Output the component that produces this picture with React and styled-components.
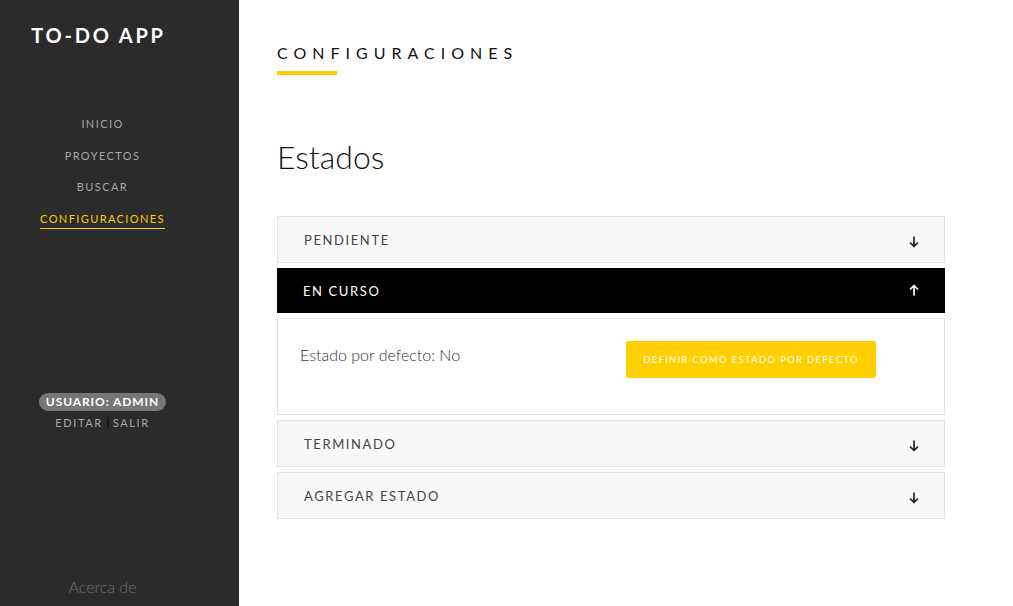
import React from "react";
import styled, { createGlobalStyle } from "styled-components";

const Global = createGlobalStyle`
  html, body { margin: 0; padding: 0; height: 100%; }
  body { font-family: "Lato", "Open Sans", sans-serif; background: #fff; }
  #root { height: 100%; }
  * { box-sizing: border-box; }
`;

const Layout = styled.div`
  display: flex;
  height: 606px;
  width: 1013px;
  overflow: hidden;
`;

const Sidebar = styled.aside`
  width: 239px;
  flex: 0 0 239px;
  background: #2b2b2b;
  display: flex;
  flex-direction: column;
  align-items: center;
  padding: 22px 34px 0 0;
`;

const Brand = styled.div`
  color: #fff;
  font-weight: 700;
  font-size: 20px;
  letter-spacing: 2.8px;
  line-height: 26px;
  margin-left: -8px;
`;

const Nav = styled.nav`
  display: flex;
  flex-direction: column;
  align-items: center;
  gap: 12.6px;
  margin-top: 67px;
`;

const NavItem = styled.a`
  font-size: 11px;
  letter-spacing: 1.4px;
  line-height: 18px;
  color: ${(p) => (p.$active ? "#ffcc00" : "#a7a7a7")};
  border-bottom: 1px solid ${(p) => (p.$active ? "#ffcc00" : "transparent")};
  text-decoration: none;
  cursor: pointer;
`;

const User = styled.div`
  margin-top: 164px;
  display: flex;
  flex-direction: column;
  align-items: center;
  gap: 4px;
`;

const Pill = styled.div`
  background: #767676;
  color: #fff;
  font-weight: 700;
  font-size: 12px;
  letter-spacing: 0.9px;
  line-height: 18px;
  padding: 0 7px;
  border-radius: 9px;
`;

const UserLinks = styled.div`
  display: flex;
  align-items: center;
  gap: 4px;
  font-size: 11px;
  letter-spacing: 1.6px;
  color: #a7a7a7;
  line-height: 16px;
`;

const Sep = styled.span`
  width: 2px;
  height: 11px;
  background: #1a1a1a;
`;

const About = styled.div`
  margin-top: auto;
  margin-bottom: 10px;
  font-size: 16px;
  color: #6f6f6f;
  font-weight: 300;
`;

const Main = styled.main`
  flex: 1;
  padding: 42px 68px 0 38px;
`;

const PageTitle = styled.h1`
  margin: 0;
  font-size: 16px;
  font-weight: 400;
  letter-spacing: 6px;
  color: #111;
  line-height: 22px;
  &::after {
    content: "";
    display: block;
    width: 60px;
    height: 4px;
    background: #ffcc00;
    margin-top: 7px;
  }
`;

const Section = styled.h2`
  margin: 63px 0 40px;
  font-size: 32px;
  font-weight: 300;
  color: #111;
  line-height: 38px;
`;

const Accordion = styled.div`
  width: 668px;
  display: flex;
  flex-direction: column;
  gap: 5px;
`;

const Header = styled.div`
  height: ${(p) => (p.$open ? "45px" : "47px")};
  display: flex;
  align-items: center;
  justify-content: space-between;
  padding: 0 25px 0 ${(p) => (p.$open ? "25px" : "26px")};
  background: ${(p) => (p.$open ? "#000" : "#f8f8f8")};
  border: 1px solid ${(p) => (p.$open ? "#000" : "#e3e3e3")};
  color: ${(p) => (p.$open ? "#fff" : "#444")};
  font-size: 13px;
  font-weight: 400;
  letter-spacing: 1.6px;
  cursor: pointer;
`;

const Panel = styled.div`
  height: 97px;
  border: 1px solid #e3e3e3;
  background: #fff;
  display: grid;
  grid-template-columns: 326px 250px;
  align-items: start;
  padding: 22px 0 0 22px;
`;

const PanelText = styled.div`
  font-size: 16px;
  font-weight: 300;
  color: #333;
  line-height: 28px;
`;

const YellowButton = styled.button`
  height: 37px;
  width: 250px;
  border: none;
  border-radius: 2px;
  background: #ffcf00;
  color: #fff;
  font-family: inherit;
  font-weight: 400;
  font-size: 9.5px;
  letter-spacing: 1.3px;
  cursor: pointer;
`;

const Arrow = ({ up, color }) => (
  <svg width="10" height="12" viewBox="0 0 10 12" style={{ transform: up ? "rotate(180deg)" : "none", marginTop: up ? -2 : 4 }}>
    <path d="M5 1 V10.5 M1.5 7 L5 10.5 L8.5 7" fill="none" stroke={color} strokeWidth="1.7" strokeLinecap="round" strokeLinejoin="round" />
  </svg>
);

const items = [
  { label: "PENDIENTE" },
  { label: "EN CURSO", open: true },
  { label: "TERMINADO" },
  { label: "AGREGAR ESTADO" },
];

export default function App() {
  return (
    <>
      <Global />
      <Layout>
        <Sidebar>
          <Brand>TO-DO APP</Brand>
          <Nav>
            <NavItem>INICIO</NavItem>
            <NavItem>PROYECTOS</NavItem>
            <NavItem>BUSCAR</NavItem>
            <NavItem $active>CONFIGURACIONES</NavItem>
          </Nav>
          <User>
            <Pill>USUARIO: ADMIN</Pill>
            <UserLinks>
              <span>EDITAR</span>
              <Sep />
              <span>SALIR</span>
            </UserLinks>
          </User>
          <About>Acerca de</About>
        </Sidebar>
        <Main>
          <PageTitle>CONFIGURACIONES</PageTitle>
          <Section>Estados</Section>
          <Accordion>
            {items.map((it) => (
              <React.Fragment key={it.label}>
                <Header $open={it.open}>
                  <span>{it.label}</span>
                  <Arrow up={it.open} color={it.open ? "#fff" : "#222"} />
                </Header>
                {it.open && (
                  <Panel>
                    <PanelText>Estado por defecto: No</PanelText>
                    <YellowButton>DEFINIR COMO ESTADO POR DEFECTO</YellowButton>
                  </Panel>
                )}
              </React.Fragment>
            ))}
          </Accordion>
        </Main>
      </Layout>
    </>
  );
}
